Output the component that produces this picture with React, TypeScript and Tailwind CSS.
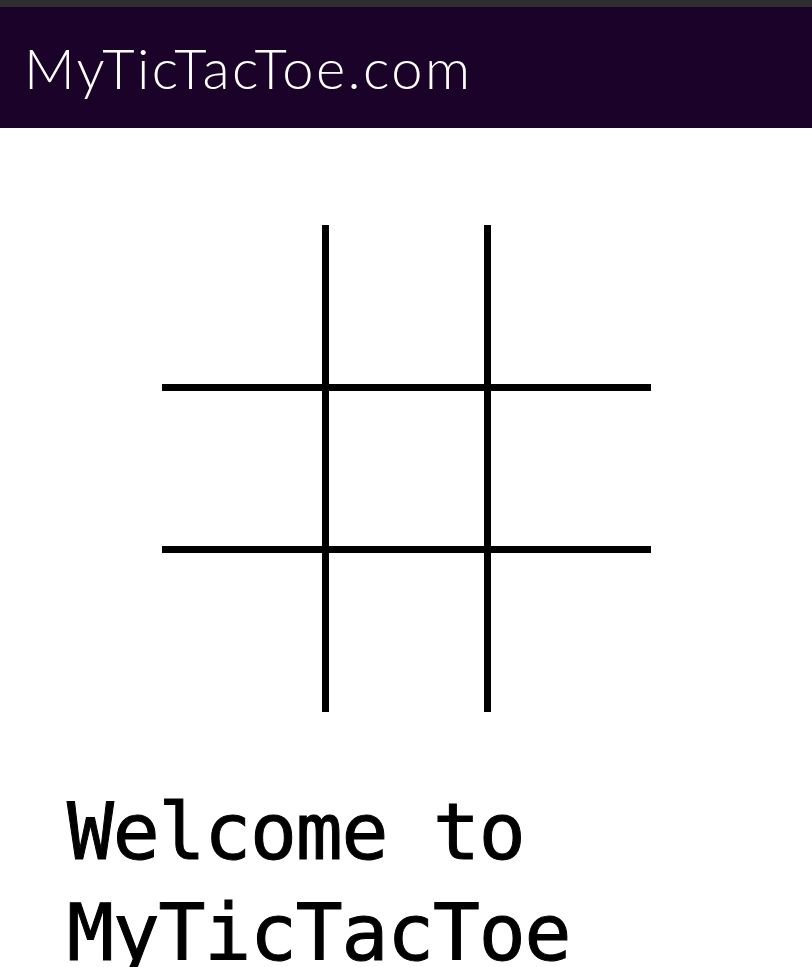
export default function App() {
  const cells = Array.from({ length: 9 });

  return (
    <div className="min-h-[967px] bg-white">
      <div className="h-[7px] bg-[#2f2f31]" />
      {/* Header */}
      <header className="flex h-[121px] items-center bg-[#1b0229] px-6">
        <span
          className="text-[56px] font-light leading-none tracking-[2.4px] text-white"
          style={{ fontFamily: 'Lato, "Open Sans", sans-serif' }}
        >
          MyTicTacToe.com
        </span>
      </header>

      {/* Board */}
      <div className="mx-auto mt-[97px] grid w-fit grid-cols-[160px_155px_160px] grid-rows-[159px_155px_159px] gap-[7px] bg-black">
        {cells.map((_, i) => (
          <div key={i} className="bg-white" />
        ))}
      </div>

      {/* Welcome text */}
      <h1
        className="mt-[70px] pl-[67px] text-[78px] leading-[101px] tracking-[-1.2px] text-black [-webkit-text-stroke:1px_black]"
        style={{ fontFamily: '"DejaVu Sans Mono", "Liberation Mono", monospace' }}
      >
        Welcome to
        <br />
        MyTicTacToe
      </h1>
    </div>
  );
}
